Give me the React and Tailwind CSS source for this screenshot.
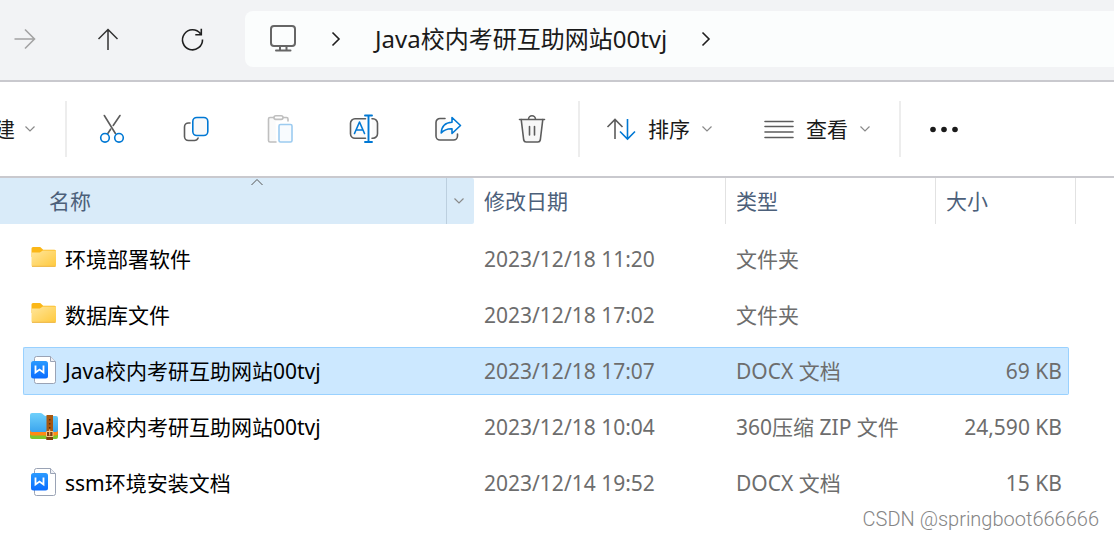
const files = [
  { icon: "folder", name: "环境部署软件", date: "2023/12/18 11:20", type: "文件夹", size: "" },
  { icon: "folder", name: "数据库文件", date: "2023/12/18 17:02", type: "文件夹", size: "" },
  { icon: "doc", name: "Java校内考研互助网站00tvj", date: "2023/12/18 17:07", type: "DOCX 文档", size: "69 KB", selected: true },
  { icon: "zip", name: "Java校内考研互助网站00tvj", date: "2023/12/18 10:04", type: "360压缩 ZIP 文件", size: "24,590 KB" },
  { icon: "doc", name: "ssm环境安装文档", date: "2023/12/14 19:52", type: "DOCX 文档", size: "15 KB" },
];

function Icon({ children, size = 32, className = "" }) {
  return (
    <svg
      width={size}
      height={size}
      viewBox={`0 0 ${size} ${size}`}
      fill="none"
      strokeWidth="1.6"
      strokeLinecap="round"
      strokeLinejoin="round"
      aria-hidden="true"
      className={`shrink-0 ${className}`}
    >
      {children}
    </svg>
  );
}

function Chevron() {
  return (
    <svg width="12" height="8" viewBox="0 0 12 8" fill="none" stroke="#8a8a8a" strokeWidth="1.2" aria-hidden="true" className="shrink-0">
      <path d="M1.5 1.5 6 6l4.5-4.5" />
    </svg>
  );
}

function CrumbChevron() {
  return (
    <svg width="10" height="16" viewBox="0 0 10 16" fill="none" stroke="#1f1f1f" strokeWidth="1.6" aria-hidden="true" className="shrink-0">
      <path d="M1.5 1.5 8 8l-6.500 6.500" />
    </svg>
  );
}

const blue = "#0078d4";
const gray = "#5c5c5c";

const tools = [
  {
    label: "剪切",
    art: (
      <>
        <path d="M8.300 2.500 19.400 20.500M24 2.500l-6.800 10M14.600 16.200 11.800 20.500" stroke={gray} />
        <circle cx="9" cy="24.800" r="4.300" stroke={blue} />
        <circle cx="23" cy="24.800" r="4.300" stroke={blue} />
      </>
    ),
  },
  {
    label: "复制",
    art: (
      <>
        <path d="M10 10H8.500a4 4 0 0 0-4 4v9.500a4 4 0 0 0 4 4H14.500a4 4 0 0 0 3.600-2.500" stroke={gray} />
        <rect x="12.800" y="4.500" width="15" height="18" rx="4" stroke={blue} fill="#f8f9fa" />
      </>
    ),
  },
  {
    label: "粘贴",
    art: (
      <>
        <path d="M11.500 4.500H6a1.500 1.500 0 0 0-1.500 1.500v21.500a1.500 1.500 0 0 0 1.500 1.500h6M18.500 4.500h4a1.500 1.500 0 0 1 1.500 1.500v2" stroke="#bfbfbf" fill="#fafafa" />
        <rect x="10" y="2.800" width="9" height="3.600" rx="1.800" stroke="#bfbfbf" fill="#fff" />
        <rect x="15" y="11.500" width="13" height="17.500" rx="1.500" stroke="#9ccbf0" fill="#f8fbfe" />
      </>
    ),
  },
  {
    label: "重命名",
    art: (
      <>
        <path d="M17.500 5.800H7A4.500 4.500 0 0 0 2.500 10.300v10.400A4.500 4.500 0 0 0 7 25.200h10.500" stroke={gray} fill="#fafafa" />
        <path d="M24 5.800h1a4.500 4.500 0 0 1 4.500 4.500v10.400a4.500 4.500 0 0 1-4.500 4.500h-1" stroke={gray} fill="#fafafa" />
        <path d="m6.500 20.500 5-11.500 5 11.500M8.300 17h6.400" stroke={blue} />
        <path d="M17 2.500h7M17 29h7M20.500 2.500V29" stroke={blue} strokeWidth="1.900" />
      </>
    ),
  },
  {
    label: "共享",
    art: (
      <>
        <path d="M13 5.500H8A4 4 0 0 0 4 9.500v13.500a4 4 0 0 0 4 4h13.500a4 4 0 0 0 4-4v-2" stroke={gray} fill="#fafafa" />
        <path d="M20 4.500 28.500 12.500 20 20.500v-4.800c-4.500-.2-8 1.200-10.800 4.300C9.500 13.500 13.500 9.500 20 9.200z" stroke={blue} fill="#fff" />
      </>
    ),
  },
  {
    label: "删除",
    art: (
      <>
        <path d="M5.200 6.500 7.700 27a2.500 2.500 0 0 0 2.500 2h11.600a2.500 2.500 0 0 0 2.500-2L26.800 6.500" stroke={gray} fill="#f7f7f7" />
        <path d="M3.500 6.500h25M12.500 6.300a3.500 3.500 0 0 1 7 0M13.500 13.500v8.500M18.500 13.500v8.500" stroke={gray} />
      </>
    ),
  },
];

function FileIcon({ kind }) {
  if (kind === "folder") {
    return (
      <svg width="28" height="28" viewBox="0 0 28 28" aria-hidden="true" className="mb-1 shrink-0">
        <defs>
          <linearGradient id="folder-face" x1="0" y1="0" x2="1" y2="1">
            <stop offset="0" stopColor="#ffe69c" />
            <stop offset="1" stopColor="#ffc93c" />
          </linearGradient>
        </defs>
        <path d="M1.500 4.500A1.500 1.500 0 0 1 3 3h7.200l3 2.700h11.300A1.500 1.500 0 0 1 26 7.200V13H1.500z" fill="#fbb717" />
        <path d="M1.500 8.500h8.300l3-2H25a1 1 0 0 1 1 1v13.800a1.500 1.500 0 0 1-1.500 1.500H3a1.500 1.500 0 0 1-1.500-1.500z" fill="url(#folder-face)" />
        <path d="M2 22.300h23.500" stroke="#edb646" strokeWidth="1" />
      </svg>
    );
  }
  if (kind === "zip") {
    return (
      <svg width="28" height="28" viewBox="0 0 28 28" aria-hidden="true" className="mb-1 shrink-0">
        <defs>
          <linearGradient id="zip-face" x1="0" y1="0" x2="0" y2="1">
            <stop offset="0" stopColor="#6fd0fb" />
            <stop offset="1" stopColor="#3ba5ee" />
          </linearGradient>
        </defs>
        <path d="M0 20h28v5a2 2 0 0 1-2 2H2a2 2 0 0 1-2-2z" fill="#7dc62d" />
        <path d="M0 17h28v4.500a2 2 0 0 1-2 2H2a2 2 0 0 1-2-2z" fill="#ff8a14" />
        <path d="M0 3a2 2 0 0 1 2-2h8.500c2.500 0 3 3 5.500 3h10a2 2 0 0 1 2 2v12a2 2 0 0 1-2 2H2a2 2 0 0 1-2-2z" fill="url(#zip-face)" />
        <path d="M16.500 3h6.500v25h-6.500z" fill="#a8570f" />
        <path d="M16.500 19h6.500v9h-6.500z" fill="#80400d" />
        <path d="M19.700 7v1.500M19.700 11v1.500M19.700 15v1.500" stroke="#5b2e0b" strokeWidth="1.500" />
        <path d="M16.500 19.500h6.500v5h-6.500zM19.700 17.500v6" fill="none" stroke="#f5c987" strokeWidth="1" />
      </svg>
    );
  }
  return (
    <svg width="28" height="28" viewBox="0 0 28 28" aria-hidden="true" className="mb-1 shrink-0">
      <defs>
        <linearGradient id="doc-badge" x1="0" y1="0" x2="0" y2="1">
          <stop offset="0" stopColor="#2b9bff" />
          <stop offset="1" stopColor="#0a6cff" />
        </linearGradient>
      </defs>
      <path d="M6.500.5h14l5 5v20a2 2 0 0 1-2 2h-17a2 2 0 0 1-2-2v-23a2 2 0 0 1 2-2z" fill="#fff" stroke="#9aa3b5" />
      <path d="M20.500.5v5h5" fill="#eef0f5" stroke="#9aa3b5" />
      <rect x="1" y="5" width="17" height="17.500" rx="2.500" fill="url(#doc-badge)" />
      <path d="M5.500 9.500v7l4-3 4 3v-7" fill="none" stroke="#fff" strokeWidth="1.800" />
    </svg>
  );
}

function Cell({ selected, className = "", children }) {
  return (
    <div className={`flex h-12 items-center border-y pt-0.5 ${selected ? "border-[#99d1ff] bg-[#cce8ff]" : "border-transparent"} ${className}`}>
      {children}
    </div>
  );
}

export default function App() {
  return (
    <div className="relative min-h-screen overflow-hidden bg-white font-['Noto_Sans','Noto_Sans_CJK_SC',sans-serif] text-[21px] text-black">
      <nav aria-label="导航" className="flex h-[82px] items-center border-b-2 border-[#c9c9ce] bg-[#f2f3f5] pb-0.5">
        <button aria-label="前进" disabled className="flex h-14 w-[66px] items-center pl-2">
          <Icon>
            <path d="M6.500 16H26M17 6.500 26.500 16 17 25.500" stroke="#a3a3a3" strokeLinecap="butt" strokeLinejoin="miter" />
          </Icon>
        </button>
        <button aria-label="向上" className="flex h-14 w-[84px] items-center justify-center">
          <Icon>
            <path d="M16 27V6.500M6.500 16 16 6.500l9.500 9.500" stroke="#333" strokeLinecap="butt" strokeLinejoin="miter" strokeWidth="1.500" />
          </Icon>
        </button>
        <button aria-label="刷新" className="flex h-14 w-[84px] items-center justify-center">
          <Icon>
            <path d="M24.500 10.800A10 10 0 1 0 26.500 16.500M25.300 5.800v6h-6" stroke="#1f1f1f" strokeLinecap="butt" strokeLinejoin="miter" />
          </Icon>
        </button>
        <div className="ml-[11px] flex h-14 flex-1 items-center rounded-l-lg bg-[#fbfdfd] pl-[22px] text-2xl text-[#1a1a1a]">
          <button aria-label="此电脑">
            <Icon>
              <rect x="4" y="3" width="24" height="20" rx="3" stroke="#666" strokeWidth="2" />
              <path d="M13 23v3.500M19.500 23v3.500M9 27.500h14.500" stroke="#666" strokeWidth="2" />
            </Icon>
          </button>
          <span className="ml-8"><CrumbChevron /></span>
          <a href="#current" className="ml-[34px] whitespace-nowrap">Java校内考研互助网站00tvj</a>
          <span className="ml-[34px]"><CrumbChevron /></span>
        </div>
      </nav>

      <div role="toolbar" aria-label="命令" className="flex h-24 items-center border-b-2 border-[#c9c9ce] text-[#1a1a1a]">
        <button aria-label="新建" className="-ml-1.5 flex h-14 w-[71px] shrink-0 items-center gap-[9px]">
          <span className="pt-0.5">建</span>
          <Chevron />
        </button>
        <div className="mr-[3px] h-14 w-0.5 bg-[#ededed]" />
        {tools.map((t) => (
          <button key={t.label} aria-label={t.label} className="flex h-14 w-[84px] shrink-0 items-center justify-center">
            <Icon>{t.art}</Icon>
          </button>
        ))}
        <div className="ml-1 h-14 w-0.5 bg-[#ededed]" />
        <button className="ml-6 flex h-14 shrink-0 items-center">
          <Icon>
            <path d="M11 26V6.500M3.500 14 11 6.500 18.500 14" stroke={gray} strokeLinecap="butt" strokeLinejoin="miter" />
            <path d="M23.500 6v20M16 18.500l7.500 7.500 7.500-7.500" stroke={blue} strokeLinecap="butt" strokeLinejoin="miter" />
          </Icon>
          <span className="mr-[11px] ml-3 pt-0.5">排序</span>
          <Chevron />
        </button>
        <button className="ml-[49px] flex h-14 shrink-0 items-center">
          <Icon>
            <path d="M3 8.500h28M3 13.500h28M3 19h28M3 24.500h28" stroke="#5c5c5c" />
          </Icon>
          <span className="mr-[11px] ml-3 pt-0.5">查看</span>
          <Chevron />
        </button>
        <div className="ml-7 h-14 w-0.5 bg-[#ededed]" />
        <button aria-label="更多" className="ml-[27px] flex h-14 items-center">
          <Icon>
            <circle cx="5" cy="16.500" r="2.800" fill="#1a1a1a" />
            <circle cx="16" cy="16.500" r="2.800" fill="#1a1a1a" />
            <circle cx="27" cy="16.500" r="2.800" fill="#1a1a1a" />
          </Icon>
        </button>
      </div>

      <table className="w-full table-fixed border-collapse">
        <colgroup>
          <col className="w-[474px]" />
          <col className="w-[252px]" />
          <col className="w-[210px]" />
          <col className="w-[140px]" />
          <col />
        </colgroup>
        <thead>
          <tr className="text-left text-[#4c607a]">
            <th className="p-0 pb-[7px] font-normal">
              <div className="relative flex h-[46px] items-center rounded-r-xs bg-[#d9ebf9] pl-[49px]">
                <span className="flex-1 pt-0.5">名称</span>
                <svg width="12" height="8" viewBox="0 0 12 8" fill="none" stroke="#555" className="absolute top-0 left-[251px]" aria-hidden="true">
                  <path d="M.5 7 6 1.500 11.500 7" />
                </svg>
                <button aria-label="筛选" className="flex h-full w-7 items-center justify-center border-l border-[#bccfdf] pr-[3px]">
                  <Chevron />
                </button>
              </div>
            </th>
            {["修改日期", "类型", "大小"].map((h) => (
              <th key={h} className="p-0 pb-[7px] font-normal">
                <div className="flex h-[46px] items-center border-r border-[#e2e2e2] pt-0.5 pl-2.5">{h}</div>
              </th>
            ))}
            <td />
          </tr>
        </thead>
        <tbody>
          {files.map((f) => (
            <tr key={f.name + f.icon} aria-selected={!!f.selected} className="h-14 whitespace-nowrap text-[#6d6d6d]">
              <td className="p-0 pl-[23px] text-black">
                <Cell selected={f.selected} className="rounded-l-xs border-l pl-1.5">
                  <FileIcon kind={f.icon} />
                  <span className="ml-[7px]">{f.name}</span>
                </Cell>
              </td>
              <td className="p-0"><Cell selected={f.selected} className="pl-2.5">{f.date}</Cell></td>
              <td className="p-0"><Cell selected={f.selected} className="pl-2.5">{f.type}</Cell></td>
              <td className="p-0 pr-[7px]">
                <Cell selected={f.selected} className="justify-end rounded-r-xs border-r pr-1.5">{f.size}</Cell>
              </td>
              <td />
            </tr>
          ))}
        </tbody>
      </table>

      <div className="absolute right-[15px] bottom-[5px] font-[Roboto,sans-serif] text-xl leading-7 font-light text-[#858585]">
        CSDN @springboot666666
      </div>
    </div>
  );
}
